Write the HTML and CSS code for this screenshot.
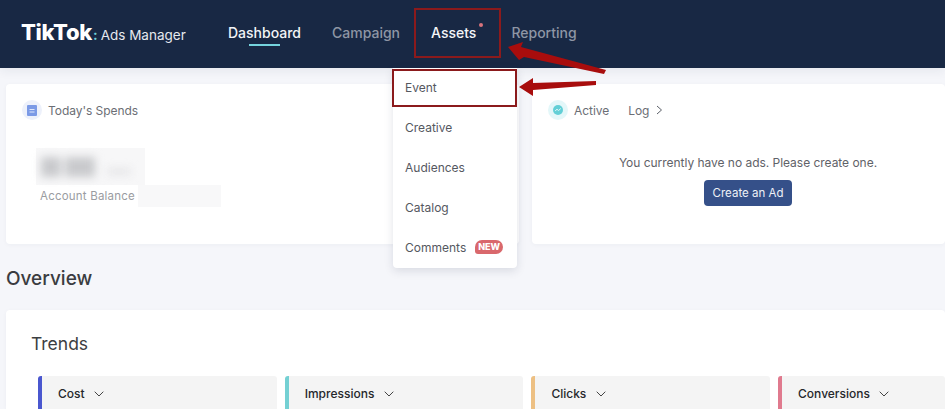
FILE: index.html
```html
<!DOCTYPE html>
<html>
<head>
	<title>TikTok Ads Manager</title>
	<link rel="stylesheet" href="styles.css">
</head>
<body>

<div class="topbar">
	<div class="logo"><span class="logo-brand">TikTok</span><span class="logo-colon">:</span><span class="logo-name">Ads Manager</span></div>
	<div class="nav">
		<span class="nav-item current">Dashboard</span>
		<span class="nav-item">Campaign</span>
		<span class="nav-item open">Assets<i class="dot"></i></span>
		<span class="nav-item">Reporting</span>
	</div>
</div>

<div class="content">
	<div class="cards">
		<div class="card spends">
			<div class="card-title">
				<span class="round blue">
					<svg width="10" height="11" viewBox="0 0 10 11"><rect width="10" height="11" rx="1" fill="#7b9ae6"/><path d="M2.5 4.5h5M2.5 7h5" stroke="#dfe7fb" stroke-width="1"/></svg>
				</span>
				Today's Spends
			</div>
			<div class="amount"><div class="smudge"><span class="smudge-a"></span><span class="smudge-b"></span><span class="smudge-c"></span></div></div>
			<div class="balance">Account Balance <span class="balance-value"></span></div>
		</div>
		<div class="card ads">
			<div class="card-title">
				<span class="round teal">
					<svg width="10" height="10" viewBox="0 0 10 10"><circle cx="5" cy="5" r="5" fill="#62cfd6"/><path d="M2.2 5.8 4 4.3l1.6 1.2 2.2-2" fill="none" stroke="#e4f8f9" stroke-width="1"/></svg>
				</span>
				Active
				<span class="log">Log
					<svg width="7" height="10" viewBox="0 0 7 10"><path d="M1 1l4.5 4L1 9" fill="none" stroke="#5c6068" stroke-width="1"/></svg>
				</span>
			</div>
			<div class="empty">
				<p>You currently have no ads. Please create one.</p>
				<span class="btn">Create an Ad</span>
			</div>
		</div>
	</div>

	<h2 class="overview">Overview</h2>

	<div class="card trends">
		<h3>Trends</h3>
		<div class="tiles">
			<div class="tile cost">Cost <svg class="chev" width="10" height="6" viewBox="0 0 10 6"><path d="M.7.7 5 5 9.3.7" fill="none" stroke="#444" stroke-width="1"/></svg></div>
			<div class="tile impressions">Impressions <svg class="chev" width="10" height="6" viewBox="0 0 10 6"><path d="M.7.7 5 5 9.3.7" fill="none" stroke="#444" stroke-width="1"/></svg></div>
			<div class="tile clicks">Clicks <svg class="chev" width="10" height="6" viewBox="0 0 10 6"><path d="M.7.7 5 5 9.3.7" fill="none" stroke="#444" stroke-width="1"/></svg></div>
			<div class="tile conversions">Conversions <svg class="chev" width="10" height="6" viewBox="0 0 10 6"><path d="M.7.7 5 5 9.3.7" fill="none" stroke="#444" stroke-width="1"/></svg></div>
		</div>
	</div>
</div>

<!-- dropdown under Assets -->
<div class="menu">
	<div class="menu-item">Event</div>
	<div class="menu-item">Creative</div>
	<div class="menu-item">Audiences</div>
	<div class="menu-item">Catalog</div>
	<div class="menu-item">Comments <span class="new">NEW</span></div>
</div>

<!-- annotations on top of the screenshot -->
<div class="mark mark-assets"></div>
<div class="mark mark-event"></div>
<svg class="arrows" width="945" height="409" viewBox="0 0 945 409">
	<polygon points="508,47 523,42 521,47 606,70 604,74 524,57 519,60" fill="#a80d0d"/>
	<polygon points="519,87 533,78 533,83 596,81 596,85 533,90 533,96" fill="#a80d0d"/>
</svg>

</body>
</html>
```

FILE: styles.css
```css
html, body {
    margin: 0;
    height: 409px;
    overflow: hidden;
}
body {
    position: relative;
    background-color: #f5f6fa;
    font-family: Inter, "Liberation Sans", sans-serif;
    font-size: 12px;
    color: #55585f;
}

.topbar {
    display: flex;
    align-items: center;
    box-sizing: border-box;
    height: 68px;
    padding: 0 0 4px 21px;
    background-color: #182844;
    box-shadow: 0 3px 10px rgba(24, 40, 68, 0.07);
}
.logo {
    display: flex;
    align-items: baseline;
    width: 207px;
    color: #fff;
}
.logo-brand {
    font-size: 22px;
    font-weight: 800;
    letter-spacing: -0.3px;
}
.logo-colon {
    margin-left: 1px;
    font-size: 14px;
    font-weight: 700;
    color: #6fd0d8;
}
.logo-name {
    margin-left: 3px;
    font-size: 13.5px;
    color: #e6e9ee;
}
.nav {
    display: flex;
    gap: 31px;
}
.nav-item {
    position: relative;
    font-size: 14px;
    font-weight: 500;
    color: #8e96a5;
}
.nav-item.current {
    color: #f2f4f7;
}
.nav-item.current:after {
    content: "";
    position: absolute;
    left: 21px;
    right: 21px;
    bottom: -5px;
    height: 2px;
    background-color: #75d3de;
}
.nav-item.open {
    margin-right: 4px;
    color: #f4f5f8;
}
.dot {
    position: absolute;
    top: -1px;
    right: -7px;
    width: 4px;
    height: 4px;
    border-radius: 50%;
    background-color: #d8737d;
}

.content {
    padding: 16px 0 0 6px;
}
.cards {
    display: flex;
    gap: 13px;
}
.card {
    background-color: #fff;
    border-radius: 4px;
    box-shadow: 0 1px 4px rgba(30, 40, 70, 0.04);
}
.spends {
    flex: none;
    box-sizing: border-box;
    width: 513px;
    height: 160px;
    padding: 16px;
}
.ads {
    box-sizing: border-box;
    flex: 1;
    min-width: 0;
    height: 160px;
    padding: 16px;
}
.card-title {
    display: flex;
    align-items: center;
    gap: 6px;
    height: 20px;
    letter-spacing: -0.05px;
    color: #6b6e75;
}
.round {
    display: flex;
    align-items: center;
    justify-content: center;
    width: 20px;
    height: 20px;
    border-radius: 50%;
}
.round.blue {
    background-color: #edf1fb;
}
.round.teal {
    background-color: #e3f7f9;
}
.log {
    display: flex;
    align-items: center;
    gap: 7px;
    margin-left: 13px;
}
.amount {
    margin: 28px 0 0 14px;
    width: 109px;
    height: 37px;
    background-color: #f7f7f8;
}
.smudge {
    display: flex;
    align-items: center;
    height: 37px;
    padding-left: 5px;
    filter: blur(4px);
}
.smudge span {
    display: block;
    background-color: #c9cacd;
}
.smudge-a {
    width: 20px;
    height: 20px;
}
.smudge .smudge-b {
    width: 30px;
    height: 20px;
    margin-left: 4px;
}
.smudge .smudge-c {
    width: 24px;
    height: 7px;
    margin: 10px 0 0 12px;
    background-color: #e6e6e8;
}
.balance {
    display: flex;
    align-items: center;
    gap: 3px;
    margin-left: 18px;
    height: 22px;
    font-size: 11.5px;
    letter-spacing: 0.2px;
    color: #9a9ca1;
}
.balance-value {
    width: 83px;
    height: 22px;
    background-color: #f8f8f9;
}
.empty {
    width: 400px;
    text-align: center;
    margin-top: 35px;
}
.empty p {
    margin: 0 0 10px;
    letter-spacing: -0.03px;
    color: #5f6268;
}
.btn {
    display: inline-block;
    width: 88px;
    font-size: 11.5px;
    line-height: 26px;
    border-radius: 4px;
    background-color: #355089;
    color: #eef1f7;
}

.overview {
    margin: 23px 0 19px;
    font-size: 19px;
    line-height: 24px;
    font-weight: 500;
    color: #3a3c40;
}
.trends {
    box-sizing: border-box;
    height: 99px;
    padding: 22px 0 0 25px;
    border-radius: 4px 4px 0 0;
}
.trends h3 {
    margin: 0 0 20px;
    font-size: 17.5px;
    line-height: 24px;
    font-weight: 400;
    color: #3c3e42;
}
.tiles {
    display: flex;
    gap: 8px;
    margin-left: 7px;
}
.tile {
    flex: 0 0 238.7px;
    box-sizing: border-box;
    height: 33px;
    padding: 10px 0 0 16px;
    border-left: 4px solid #4a57cf;
    border-radius: 3px 3px 0 0;
    background-color: #f4f4f4;
    font-weight: 500;
    color: #25272b;
}
.chev {
    margin-left: 6px;
    vertical-align: 1px;
}
.impressions { border-left-color: #74d0d3; }
.clicks { border-left-color: #edc083; }
.conversions {
    flex: 1;
    border-left-color: #e07a8e;
}

.menu {
    position: absolute;
    left: 393px;
    top: 68px;
    width: 124px;
    height: 200px;
    background-color: #fff;
    border-radius: 0 0 4px 4px;
    box-shadow: 0 3px 10px rgba(30, 40, 70, 0.13);
}
.menu-item {
    display: flex;
    align-items: center;
    box-sizing: border-box;
    height: 40px;
    padding: 0 0 2px 12px;
    color: #55585f;
}
.new {
    margin-left: 9px;
    padding: 0 3px;
    height: 14px;
    line-height: 14px;
    border-radius: 7px 7px 7px 3px;
    background-color: #d9686c;
    font-size: 9px;
    font-weight: 800;
    color: #fff;
}

.mark {
    position: absolute;
    box-sizing: border-box;
    border: 2px solid #8b1a1c;
}
.mark-assets {
    left: 414px;
    top: 8px;
    width: 87px;
    height: 50px;
}
.mark-event {
    left: 392px;
    top: 69px;
    width: 125px;
    height: 38px;
}
.arrows {
    position: absolute;
    left: 0;
    top: 0;
}
```
